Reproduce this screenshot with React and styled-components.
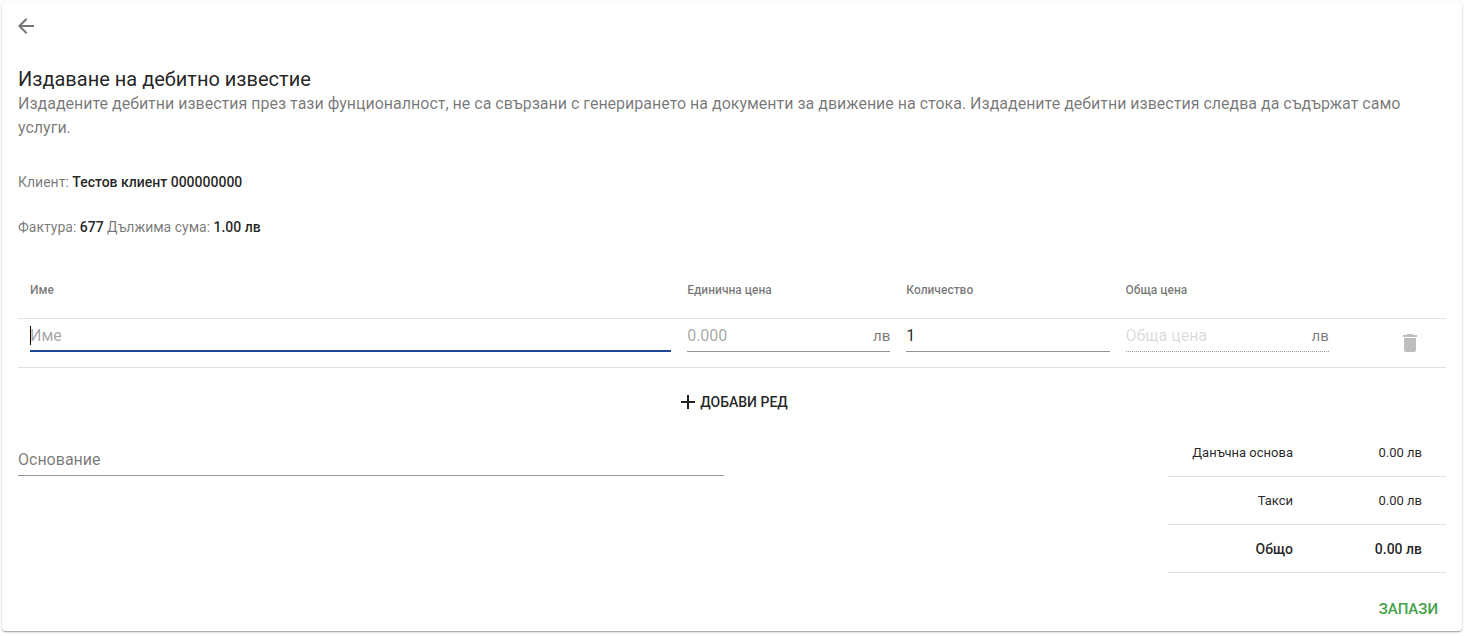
import React from "react";
import styled, { createGlobalStyle, css } from "styled-components";
import { MdAdd, MdArrowBack, MdDelete } from "react-icons/md";

const columns = ["Име", "Единична цена", "Количество", "Обща цена", ""];

const totals = [
	{ label: "Данъчна основа", value: "0.00 лв" },
	{ label: "Такси", value: "0.00 лв" },
	{ label: "Общо", value: "0.00 лв", strong: true },
];

function App() {
	return (
		<>
			<GlobalStyle />
			<Page>
				<Card>
					<Toolbar>
						<IconButton type="button" aria-label="Назад">
							<MdArrowBack size={24} />
						</IconButton>
					</Toolbar>
					<Title>Издаване на дебитно известие</Title>
					<Description>
						Издадените дебитни известия през тази фунционалност, не са свързани
						с генерирането на документи за движение на стока. Издадените дебитни
						известия следва да съдържат само услуги.
					</Description>
					<Details>
						<Detail>
							Клиент: <b>Тестов клиент 000000000</b>
						</Detail>
						<Detail>
							Фактура: <b>677</b> Дължима сума: <b>1.00 лв</b>
						</Detail>
					</Details>
					<ItemsTable>
						<colgroup>
							<NameCol />
							<ValueCol />
							<ValueCol />
							<ValueCol />
							<col />
						</colgroup>
						<thead>
							<tr>
								{columns.map((column) => (
									<HeadCell key={column}>{column}</HeadCell>
								))}
							</tr>
						</thead>
						<tbody>
							<tr>
								<ItemCell>
									<Field $variant="focused">
										<Input aria-label="Име" placeholder="Име" autoFocus />
									</Field>
								</ItemCell>
								<ItemCell>
									<Field>
										<Input aria-label="Единична цена" placeholder="0.000" />
										<Currency>лв</Currency>
									</Field>
								</ItemCell>
								<ItemCell>
									<Field>
										<Input aria-label="Количество" defaultValue="1" />
									</Field>
								</ItemCell>
								<ItemCell>
									<Field $variant="disabled">
										<Input
											aria-label="Обща цена"
											placeholder="Обща цена"
											disabled
										/>
										<Currency>лв</Currency>
									</Field>
								</ItemCell>
								<ActionCell>
									<IconButton type="button" aria-label="Изтрий" disabled>
										<MdDelete size={24} />
									</IconButton>
								</ActionCell>
							</tr>
						</tbody>
					</ItemsTable>
					<AddRow>
						<Button type="button">
							<MdAdd size={24} />
							Добави ред
						</Button>
					</AddRow>
					<Summary>
						<Reason>
							<Field>
								<Input
									aria-label="Основание"
									placeholder="Основание"
									$label
								/>
							</Field>
						</Reason>
						<TotalsTable>
							<tbody>
								{totals.map(({ label, value, strong }) => (
									<TotalRow key={label} $strong={strong}>
										<TotalLabel scope="row">{label}</TotalLabel>
										<TotalValue>{value}</TotalValue>
									</TotalRow>
								))}
							</tbody>
						</TotalsTable>
					</Summary>
					<Actions>
						<SaveButton type="button">Запази</SaveButton>
					</Actions>
				</Card>
			</Page>
		</>
	);
}

export default App;

const GlobalStyle = createGlobalStyle`
	*,
	*::before,
	*::after {
		box-sizing: border-box;
	}
	body {
		margin: 0;
		background: #fff;
		color: rgba(0, 0, 0, 0.87);
		font-family: Roboto, "Liberation Sans", sans-serif;
	}
`;

const Page = styled.div`
	padding: 2px 5px 5px 2px;
`;

const Card = styled.main`
	padding: 0 16px;
	border-radius: 4px;
	background: #fff;
	box-shadow: 0 1px 3px 0 rgba(0, 0, 0, 0.2), 0 1px 1px 0 rgba(0, 0, 0, 0.14),
		0 2px 1px -1px rgba(0, 0, 0, 0.12);
`;

const Toolbar = styled.div`
	display: flex;
	align-items: center;
	height: 48px;
	margin-left: -4px;
`;

const IconButton = styled.button`
	display: inline-flex;
	padding: 0;
	border: 0;
	background: none;
	color: rgba(0, 0, 0, 0.54);
	cursor: pointer;

	&:disabled {
		color: rgba(0, 0, 0, 0.26);
		cursor: default;
	}
`;

const Title = styled.h1`
	margin: 16px 0 0;
	font-size: 20px;
	font-weight: 400;
	line-height: 26px;
`;

const Description = styled.p`
	margin: 0;
	color: rgba(0, 0, 0, 0.54);
	font-size: 16px;
	line-height: 24px;
`;

const Details = styled.div`
	display: grid;
	gap: 24px;
	padding: 32px 0 24px;
`;

const Detail = styled.p`
	margin: 0;
	color: rgba(0, 0, 0, 0.54);
	font-size: 14px;
	line-height: 21px;

	b {
		color: rgba(0, 0, 0, 0.87);
		font-weight: 500;
	}
`;

const ItemsTable = styled.table`
	width: 100%;
	table-layout: fixed;
	border-collapse: collapse;
`;

const NameCol = styled.col`
	width: 46.3%;
`;

const ValueCol = styled.col`
	width: 15.35%;
`;

const HeadCell = styled.th`
	height: 56px;
	padding: 0 8px;
	border-bottom: 1px solid #e0e0e0;
	color: rgba(0, 0, 0, 0.54);
	font-size: 12px;
	font-weight: 500;
	text-align: left;

	&:first-child {
		padding-left: 12px;
	}
`;

const ItemCell = styled.td`
	height: 49px;
	padding: 0 8px;
	border-bottom: 1px solid #e0e0e0;
	vertical-align: top;

	&:first-child {
		padding-left: 12px;
	}
`;

const ActionCell = styled(ItemCell)`
	padding: 12px 24px 0 0;
	text-align: right;
`;

const lines = {
	focused: "2px solid #204594",
	disabled: "1px dotted rgba(0, 0, 0, 0.42)",
	normal: "1px solid rgba(0, 0, 0, 0.42)",
};

const caret = css`
	position: relative;
	caret-color: transparent;

	&::before {
		content: "";
		position: absolute;
		top: 7px;
		left: 0;
		width: 1px;
		height: 19px;
		background: #000;
	}
`;

const Field = styled.div`
	display: flex;
	align-items: center;
	height: 33px;
	padding-top: 2px;
	border-bottom: ${({ $variant = "normal" }) => lines[$variant]};
	${({ $variant }) => $variant === "focused" && caret}
`;

const Input = styled.input`
	flex: 1;
	min-width: 0;
	height: 100%;
	padding: 0;
	border: 0;
	outline: 0;
	background: none;
	color: rgba(0, 0, 0, 0.87);
	font: 16px Roboto, "Liberation Sans", sans-serif;

	&::placeholder {
		color: rgba(0, 0, 0, ${({ $label }) => ($label ? 0.54 : 0.37)});
		opacity: 1;
	}

	&:disabled::placeholder {
		color: rgba(0, 0, 0, 0.16);
	}
`;

const Currency = styled.span`
	color: rgba(0, 0, 0, 0.54);
	font-size: 15px;
`;

const AddRow = styled.div`
	display: flex;
	justify-content: center;
	padding: 16px 0 8px;
`;

const Button = styled.button`
	display: inline-flex;
	align-items: center;
	height: 36px;
	padding: 0 8px;
	border: 0;
	background: none;
	color: rgba(0, 0, 0, 0.87);
	font: 500 14px Roboto, "Liberation Sans", sans-serif;
	text-transform: uppercase;
	cursor: pointer;
`;

const SaveButton = styled(Button)`
	color: #43a047;
	font-size: 15px;
`;

const Summary = styled.div`
	display: grid;
	grid-template-columns: 1fr 1fr;
	gap: 16px;
`;

const Reason = styled.div`
	padding-top: 15px;
`;

const TotalsTable = styled.table`
	justify-self: end;
	margin-top: 1px;
	border-collapse: collapse;
`;

const TotalRow = styled.tr`
	height: 48px;
	border-bottom: 1px solid #e0e0e0;
	font-size: ${({ $strong }) => ($strong ? 14 : 13)}px;
	font-weight: ${({ $strong }) => ($strong ? 500 : 400)};
	text-align: right;
`;

const TotalLabel = styled.th`
	padding: 0 56px 0 24px;
	font-weight: inherit;
	text-align: right;
`;

const TotalValue = styled.td`
	width: 97px;
	padding: 0 24px;
`;

const Actions = styled.div`
	display: flex;
	justify-content: flex-end;
	padding: 18px 0 4px;
`;
